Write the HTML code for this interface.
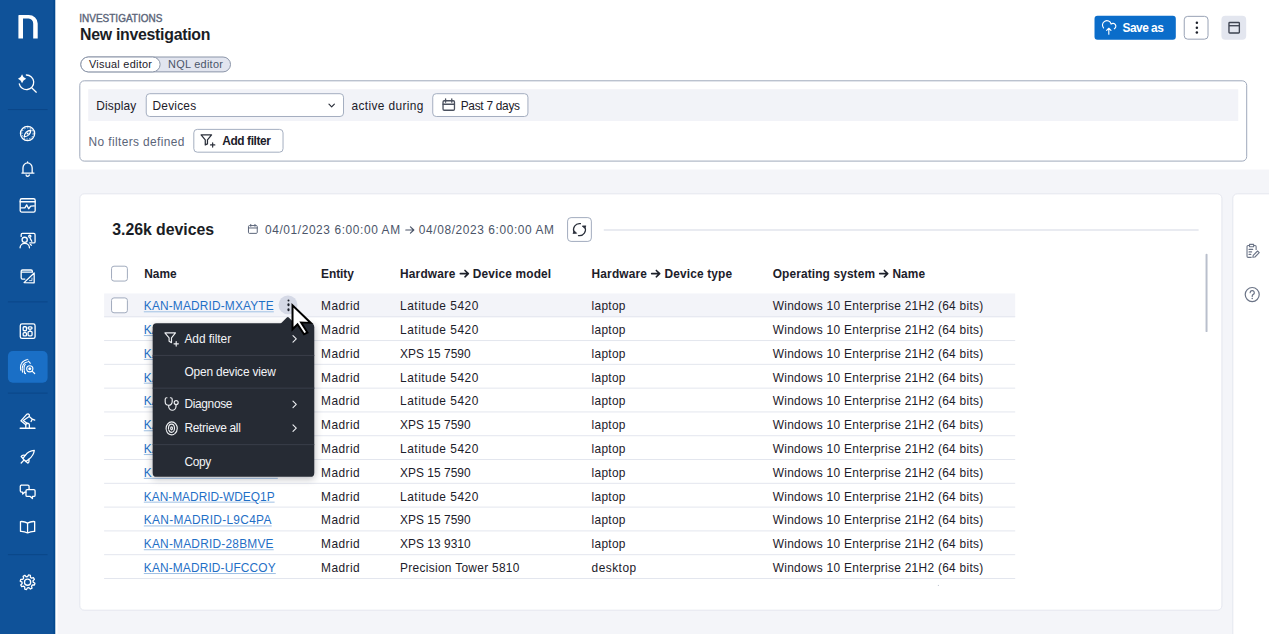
<!DOCTYPE html>
<html><head><meta charset="utf-8">
<style>
html,body{margin:0;padding:0;width:1269px;height:634px;overflow:hidden;background:#f4f5f9}
*{box-sizing:border-box}
#app{position:absolute;left:0;top:0;width:1280px;height:640px;transform:scale(0.99140625);transform-origin:0 0;font-family:"Liberation Sans",sans-serif;color:#1c202a;background:#f4f5f9;overflow:hidden}
.a{position:absolute}
.t{position:absolute;white-space:nowrap;line-height:1}
.lnk{text-decoration:underline;text-decoration-color:#9fc0e4;text-underline-offset:1.4px;text-decoration-thickness:1px}
.row{position:absolute;left:104.9px;width:919.2px;height:24px;border-bottom:1px solid #e3e6ee}
svg{display:block;overflow:visible}
.ar svg{display:inline-block}
.sb{-webkit-text-stroke:0.4px currentColor}
</style></head>
<body>
<div id="app">
<div class="a" style="left:0.00px;top:0.00px;width:55.48px;height:639.50px;background:#0f5299"></div>
<div class="a" style="left:54.37px;top:0.00px;width:1.61px;height:639.50px;background:#03498f"></div>
<div class="a" style="left:55.98px;top:0.00px;width:1.71px;height:639.50px;background:#ffffff"></div>
<div class="a" style="left:8.07px;top:109.74px;width:39.64px;height:1.01px;background:#0b4688"></div>
<div class="a" style="left:8.07px;top:304.42px;width:39.64px;height:1.01px;background:#0b4688"></div>
<div class="a" style="left:8.07px;top:395.50px;width:39.64px;height:1.01px;background:#0b4688"></div>
<div class="a" style="left:8.07px;top:558.60px;width:39.64px;height:1.01px;background:#0b4688"></div>
<div class="a" style="left:7.97px;top:354.04px;width:39.74px;height:31.47px;background:#1a6fc6;border-radius:5px"></div>
<svg class="a" style="left:10.09px;top:10.09px;width:36.31px;height:36.31px;" viewBox="0 0 36 36"><path d="M8.5 28.7V5.6Q8.5 5.1 9.1 5.1H18.8A9 8.5 0 0 1 27.8 13.6V28.7H23.3V13.8A4.6 5 0 0 0 18.7 8.6H13.1V28.7Z" fill="#fff"/></svg>
<svg class="a" style="left:14.12px;top:70.61px;width:28.24px;height:28.24px;" viewBox="0 0 28 28"><path d="M8.17 3.9Q9.1 7.4 12.3 8.4Q9.1 9.4 8.17 12.9Q7.2 9.4 4.1 8.4Q7.2 7.4 8.17 3.9Z" fill="#fff"/><path d="M12.5 4.6A7.3 7.3 0 1 1 5.4 13.4" fill="none" stroke="#fff" stroke-width="1.3" stroke-linecap="round" stroke-linejoin="round"/><path d="M17.8 17.3L22.4 21.8" fill="none" stroke="#fff" stroke-width="1.3" stroke-linecap="round" stroke-linejoin="round"/></svg>
<svg class="a" style="left:14.12px;top:121.04px;width:28.24px;height:28.24px;" viewBox="0 0 28 28"><circle cx="13.7" cy="13.5" r="7.1" fill="none" stroke="#fff" stroke-width="1.3" stroke-linecap="round" stroke-linejoin="round" stroke-width="1.5"/><circle cx="13.7" cy="13.5" r="5.6" fill="none" stroke="#fff" stroke-width="1" stroke-dasharray="1.2 1.6"/><path d="M10.3 16.9Q10.9 11 17.1 10.1Q16.5 16.2 10.3 16.9Z" fill="none" stroke="#fff" stroke-width="1.2" stroke-linejoin="round"/><circle cx="13.7" cy="13.5" r="1" fill="#fff"/></svg>
<svg class="a" style="left:14.12px;top:157.35px;width:28.24px;height:28.24px;" viewBox="0 0 28 28"><path d="M8 17.4H20.1M9.1 17.3V12.3A4.6 5 0 0 1 18.3 12.3V17.3M13.7 7.3V6.3" fill="none" stroke="#fff" stroke-width="1.3" stroke-linecap="round" stroke-linejoin="round"/><path d="M12.2 19.3A1.6 1.3 0 0 0 15.4 19.3" fill="none" stroke="#fff" stroke-width="1.3" stroke-linecap="round" stroke-linejoin="round"/></svg>
<svg class="a" style="left:14.12px;top:192.66px;width:28.24px;height:28.24px;" viewBox="0 0 28 28"><rect x="6.3" y="7.4" width="15" height="13.3" rx="1.6" fill="none" stroke="#fff" stroke-width="1.3" stroke-linecap="round" stroke-linejoin="round"/><path d="M6.3 10.4H21.3M7 16.6H11L12.8 13.5L14.8 17.4L16.8 14.8L20.4 14.6" fill="none" stroke="#fff" stroke-width="1.3" stroke-linecap="round" stroke-linejoin="round"/></svg>
<svg class="a" style="left:14.12px;top:228.97px;width:28.24px;height:28.24px;" viewBox="0 0 28 28"><path d="M7.3 9.4V7.6Q7.3 6.4 8.5 6.4H20Q21.2 6.4 21.2 7.6V14.7Q21.2 15.9 20 15.9H15.8" fill="none" stroke="#fff" stroke-width="1.3" stroke-linecap="round" stroke-linejoin="round"/><circle cx="10.8" cy="12.8" r="2.6" fill="none" stroke="#fff" stroke-width="1.3" stroke-linecap="round" stroke-linejoin="round"/><path d="M6.2 20.8A4.7 4.5 0 0 1 15.6 20.8" fill="none" stroke="#fff" stroke-width="1.3" stroke-linecap="round" stroke-linejoin="round"/><circle cx="15.9" cy="9.3" r="1.1" fill="none" stroke="#fff" stroke-width="1.3" stroke-linecap="round" stroke-linejoin="round"/><path d="M16.3 11.3L17.9 14.2M16.5 17.5L17.6 18.2" fill="none" stroke="#fff" stroke-width="1.3" stroke-linecap="round" stroke-linejoin="round"/></svg>
<svg class="a" style="left:14.12px;top:265.28px;width:28.24px;height:28.24px;" viewBox="0 0 28 28"><path d="M11 16.4H8.6Q7.3 16.4 7.3 15.1V8.6Q7.3 7.3 8.6 7.3H17.2Q18.5 7.3 18.5 8.6V9.5H7.3" fill="none" stroke="#fff" stroke-width="1.3" stroke-linecap="round" stroke-linejoin="round"/><path d="M10.2 19.9L20.3 10.2V20.1Z" fill="none" stroke="#fff" stroke-width="1.3" stroke-linecap="round" stroke-linejoin="round"/><path d="M15.6 17.9H18.1V15.3" fill="none" stroke="#fff" stroke-width="1" stroke-linecap="round" opacity=".8"/></svg>
<svg class="a" style="left:14.12px;top:319.75px;width:28.24px;height:28.24px;" viewBox="0 0 28 28"><rect x="6.4" y="6.6" width="14.8" height="14.6" rx="1.8" fill="none" stroke="#fff" stroke-width="1.3" stroke-linecap="round" stroke-linejoin="round"/><rect x="9.3" y="9.5" width="3.3" height="4" rx="0.9" fill="none" stroke="#fff" stroke-width="1.3" stroke-linecap="round" stroke-linejoin="round" stroke-width="1.1"/><rect x="9.3" y="15.4" width="3.3" height="3.2" rx="0.9" fill="none" stroke="#fff" stroke-width="1.3" stroke-linecap="round" stroke-linejoin="round" stroke-width="1.1"/><rect x="14.2" y="9.6" width="4" height="2.3" rx="1.1" fill="none" stroke="#fff" stroke-width="1.3" stroke-linecap="round" stroke-linejoin="round" stroke-width="1.1"/><rect x="14.2" y="14.1" width="4" height="4.5" rx="1" fill="none" stroke="#fff" stroke-width="1.3" stroke-linecap="round" stroke-linejoin="round" stroke-width="1.1"/><path d="M16.2 11.9V14.1" stroke="#fff" stroke-width="1.1"/></svg>
<svg class="a" style="left:14.12px;top:356.06px;width:28.24px;height:28.24px;" viewBox="0 0 28 28"><g fill="none" stroke="#fff" stroke-width="1.15" stroke-linecap="round"><path d="M6.9 17.2Q5.2 8.6 13.9 6.5" stroke-dasharray="2.6 1"/><path d="M8.7 19.2Q7.1 10.7 13.4 9" stroke-dasharray="2.4 1"/><path d="M10.8 20.2Q9.4 13.6 11.3 11.6" stroke-dasharray="1.8 1"/><path d="M14.5 8.2Q15.6 8.8 16.4 10.4"/><path d="M11.2 20.3L11.6 20.6"/><circle cx="15.9" cy="15.9" r="3.1"/><path d="M18.2 18.2L20.8 20.6"/></g><circle cx="15.9" cy="15.9" r="1.5" fill="#fff"/></svg>
<svg class="a" style="left:14.12px;top:410.53px;width:28.24px;height:28.24px;" viewBox="0 0 28 28"><path d="M6.4 20.8H21" fill="none" stroke="#fff" stroke-width="1.6" stroke-linecap="round"/><path d="M11.9 20V17.6A1.8 1.8 0 0 1 15.5 17.6V20" fill="none" stroke="#fff" stroke-width="1.3" stroke-linecap="round" stroke-linejoin="round"/><path d="M11.9 17.4L7 13.4L12.8 6.9Q14.3 5.9 15.4 7.2Q16 8.6 14.6 9.6L9.4 13.1L13.4 16.1" fill="none" stroke="#fff" stroke-width="1.3" stroke-linecap="round" stroke-linejoin="round"/><path d="M15.6 9.3L18.2 11.5M17.2 14L18.4 11.7L20.9 12.6" fill="none" stroke="#fff" stroke-width="1.3" stroke-linecap="round" stroke-linejoin="round"/></svg>
<svg class="a" style="left:14.12px;top:446.84px;width:28.24px;height:28.24px;" viewBox="0 0 28 28"><path d="M20.4 7.3Q15 7.6 11.2 12.4L8.9 15.4L11.9 18.3L15 16Q19.8 12.3 20.4 7.3Z" fill="none" stroke="#fff" stroke-width="1.3" stroke-linecap="round" stroke-linejoin="round"/><path d="M11.3 12.3Q8.3 11.5 7.3 13.3L8.7 14.8M14.9 16.1Q15.7 19.1 13.9 20L12.5 18.6M9.8 17.2L7.3 19.9" fill="none" stroke="#fff" stroke-width="1.3" stroke-linecap="round" stroke-linejoin="round"/></svg>
<svg class="a" style="left:14.12px;top:482.14px;width:28.24px;height:28.24px;" viewBox="0 0 28 28"><path d="M7.8 7.2H14Q15.2 7.2 15.2 8.4V11.6M12.1 14.2H11.1L8.8 16.2V14.2H7.6Q6.4 14.2 6.4 13V8.4Q6.4 7.2 7.6 7.2" fill="none" stroke="#fff" stroke-width="1.3" stroke-linecap="round" stroke-linejoin="round"/><path d="M13.3 11.7H20Q21.2 11.7 21.2 12.9V17.4Q21.2 18.6 20 18.6H18.6V20.7L16.3 18.6H13.3Q12.1 18.6 12.1 17.4V12.9Q12.1 11.7 13.3 11.7Z" fill="none" stroke="#fff" stroke-width="1.3" stroke-linecap="round" stroke-linejoin="round"/></svg>
<svg class="a" style="left:14.12px;top:518.46px;width:28.24px;height:28.24px;" viewBox="0 0 28 28"><path d="M13.7 9.6V19.3M13.7 9.6Q10.5 7.6 6.6 8V17.8Q10.5 17.6 13.7 19.4Q16.9 17.6 20.8 17.8V8Q16.9 7.6 13.7 9.6Z" fill="none" stroke="#fff" stroke-width="1.3" stroke-linecap="round" stroke-linejoin="round"/></svg>
<svg class="a" style="left:14.12px;top:572.92px;width:28.24px;height:28.24px;" viewBox="0 0 28 28"><path d="M19.30 14.10 L21.03 15.14 L20.54 16.93 L18.52 16.95 L17.66 18.06 L18.14 20.02 L16.53 20.94 L15.09 19.52 L13.70 19.70 L12.66 21.43 L10.87 20.94 L10.85 18.92 L9.74 18.06 L7.78 18.54 L6.86 16.93 L8.28 15.49 L8.10 14.10 L6.37 13.06 L6.86 11.27 L8.88 11.25 L9.74 10.14 L9.26 8.18 L10.87 7.26 L12.31 8.68 L13.70 8.50 L14.74 6.77 L16.53 7.26 L16.55 9.28 L17.66 10.14 L19.62 9.66 L20.54 11.27 L19.12 12.71Z" fill="none" stroke="#fff" stroke-width="1.3" stroke-linecap="round" stroke-linejoin="round"/><circle cx="13.7" cy="14.1" r="3.1" fill="none" stroke="#fff" stroke-width="1.3" stroke-linecap="round" stroke-linejoin="round"/></svg>
<div class="a" style="left:57.49px;top:0.00px;width:1222.51px;height:171.07px;background:#ffffff"></div>
<div class="a" style="left:80.69px;top:56.79px;width:152.81px;height:15.74px;border:1px solid #8a94a7;border-radius:8px;background:#e2e5ef"></div>
<div class="a" style="left:80.69px;top:56.79px;width:81.20px;height:15.74px;border:1px solid #8a94a7;border-radius:8px;background:#ffffff"></div>
<div class="a" style="left:1103.79px;top:16.14px;width:82.00px;height:23.70px;background:#0b6dca;border-radius:3px"></div>
<svg class="a" style="left:1109.54px;top:19.16px;width:18.16px;height:18.16px;" viewBox="0 0 18 18"><path d="M3.05 9.13A4.4 4.4 0 1 1 10.65 5.22A2.9 2.9 0 1 1 13.9 10.0M8.35 15.3V9.5M6.2 11.6L8.35 9.4L10.5 11.6" fill="none" stroke="#fff" stroke-width="1.15" stroke-linecap="round" stroke-linejoin="round"/></svg>
<div class="a" style="left:1193.56px;top:15.94px;width:25.82px;height:24.11px;border:1.5px solid #97a1b4;border-radius:4px;background:#fff"></div>
<svg class="a" style="left:1200.62px;top:18.16px;width:12.10px;height:20.17px;" viewBox="0 0 12 20"><circle cx="6.2" cy="5.0" r="1.25" fill="#1c202a"/><circle cx="6.2" cy="9.9" r="1.25" fill="#1c202a"/><circle cx="6.2" cy="14.7" r="1.25" fill="#1c202a"/></svg>
<div class="a" style="left:1231.58px;top:16.14px;width:25.22px;height:23.80px;background:#e3e6ef;border-radius:4px"></div>
<svg class="a" style="left:1236.63px;top:20.68px;width:16.14px;height:15.13px;" viewBox="0 0 16 15"><rect x="2.6" y="1.7" width="10.4" height="10.5" rx="0.8" fill="none" stroke="#3d4350" stroke-width="1.35"/><path d="M2.6 4.9H13" stroke="#3d4350" stroke-width="1.35"/></svg>
<div class="a" style="left:79.68px;top:81.10px;width:1178.12px;height:82.31px;border:1.8px solid #9ea8ba;border-radius:5px;background:#fff"></div>
<div class="a" style="left:88.56px;top:89.97px;width:1160.37px;height:31.77px;background:#f2f3f8"></div>
<div class="a" style="left:146.56px;top:94.31px;width:200.02px;height:23.70px;border:1.5px solid #a3adbf;border-radius:4px;background:#fff"></div>
<svg class="a" style="left:328.83px;top:101.67px;width:11.10px;height:9.08px;" viewBox="0 0 11 9"><path d="M2.8 3L5.5 5.7L8.2 3" fill="none" stroke="#2a2f3a" stroke-width="1.2" stroke-linecap="round" stroke-linejoin="round"/></svg>
<div class="a" style="left:435.74px;top:94.31px;width:97.34px;height:23.70px;border:1.5px solid #a3adbf;border-radius:4px;background:#fff"></div>
<svg class="a" style="left:443.81px;top:97.84px;width:16.14px;height:16.14px;" viewBox="0 0 16 16"><rect x="2.85" y="3.6" width="11.45" height="9.5" rx="1.2" fill="none" stroke="#4a505e" stroke-width="1.3"/><path d="M2.85 7.1H14.3M5.4 1.7V5.0M11.6 1.7V5.0" fill="none" stroke="#4a505e" stroke-width="1.3" stroke-linecap="round"/></svg>
<div class="a" style="left:194.87px;top:130.22px;width:90.68px;height:23.70px;border:1.5px solid #a3adbf;border-radius:4px;background:#fff"></div>
<svg class="a" style="left:200.72px;top:134.15px;width:17.15px;height:16.14px;" viewBox="0 0 17 16"><path d="M1.8 2.1H12.3L8.2 7V11.1L6 12.1V7Z" fill="none" stroke="#2a2f3a" stroke-width="1.25" stroke-linejoin="round"/><path d="M13.4 9.9V14.2M11.25 12.05H15.55" stroke="#2a2f3a" stroke-width="1.2" stroke-linecap="round"/></svg>
<div class="a" style="left:80.39px;top:194.98px;width:1152.50px;height:420.61px;background:#fff;border:1px solid #e4e6ee;border-radius:5px"></div>
<div class="a" style="left:1243.49px;top:194.98px;width:57.70px;height:460.66px;background:#fff;border:1px solid #e4e6ee;border-radius:5px"></div>
<svg class="a" style="left:1253.77px;top:244.10px;width:18.16px;height:18.16px;" viewBox="0 0 18 18"><path d="M6.3 3.6H4.9Q3.8 3.6 3.8 4.7V14.4Q3.8 15.5 4.9 15.5H8.4M12.9 8.2V4.7Q12.9 3.6 11.8 3.6H10.4M6.3 2.5H10.4V4.9H6.3Z" fill="none" stroke="#6b7487" stroke-width="1.1" stroke-linejoin="round"/><path d="M5.8 7.5H9.5M5.8 10H8.4M5.8 12.5H7.6M9.6 15.4L10 13.4L14.3 9.1L16 10.8L11.7 15.1Z" fill="none" stroke="#6b7487" stroke-width="1.1" stroke-linejoin="round" stroke-linecap="round"/></svg>
<svg class="a" style="left:1253.77px;top:288.48px;width:18.16px;height:18.16px;" viewBox="0 0 18 18"><circle cx="9" cy="9" r="7" fill="none" stroke="#6b7487" stroke-width="1.2"/><path d="M6.9 7.2A2.1 2.1 0 1 1 9.8 9.1Q9 9.5 9 10.4V10.9" fill="none" stroke="#6b7487" stroke-width="1.2" stroke-linecap="round"/><circle cx="9" cy="12.9" r="0.8" fill="#6b7487"/></svg>
<svg class="a" style="left:248.13px;top:223.92px;width:14.12px;height:14.12px;" viewBox="0 0 14 14"><rect x="2.6" y="3.5" width="8.8" height="7.8" rx="1" fill="none" stroke="#5b6579" stroke-width="1"/><path d="M2.6 5.9H11.4M4.9 2.3V4.2M9.1 2.3V4.2" fill="none" stroke="#5b6579" stroke-width="1" stroke-linecap="round"/></svg>
<div class="a" style="left:571.91px;top:219.28px;width:25.42px;height:24.41px;border:1.3px solid #a1abbd;border-radius:4px;background:#fff"></div>
<svg class="a" style="left:574.94px;top:221.91px;width:19.16px;height:19.16px;" viewBox="0 0 19 19"><path d="M10.4 3.6A6 6 0 0 0 4.2 12.4M8.4 15.5A6 6 0 0 0 14.6 6.6" fill="none" stroke="#2a2f3a" stroke-width="1.2" stroke-linecap="round"/><path d="M2.9 13.3L4.3 10.9L6.6 13.2Z M15.9 5.8L14.5 8.2L12.2 5.9Z" fill="#2a2f3a" stroke="#2a2f3a" stroke-width="0.8" stroke-linejoin="round"/></svg>
<div class="a" style="left:609.24px;top:231.39px;width:599.65px;height:1.21px;background:#e9ebf1"></div>
<div class="a" style="left:1216.25px;top:255.50px;width:1.51px;height:79.38px;background:#b9bfcc;border-radius:1px"></div>
<div class="a" style="left:112.47px;top:267.70px;width:16.64px;height:16.34px;border:1.6px solid #a0aabc;border-radius:3px;background:#fff"></div>
<div class="row" style="top:295.84px;background:#f3f4f9;"></div>
<div class="row" style="top:319.84px;"></div>
<div class="row" style="top:343.83px;"></div>
<div class="row" style="top:367.83px;"></div>
<div class="row" style="top:391.83px;"></div>
<div class="row" style="top:415.82px;"></div>
<div class="row" style="top:439.82px;"></div>
<div class="row" style="top:463.82px;"></div>
<div class="row" style="top:487.81px;"></div>
<div class="row" style="top:511.81px;"></div>
<div class="row" style="top:535.80px;"></div>
<div class="row" style="top:559.80px;"></div>
<div id="tx0" class="t sb scl" style="left:80.49px;top:12.99px;font-size:11px;font-weight:400;color:#5b6579;transform:scaleX(0.9151);transform-origin:0 0">INVESTIGATIONS</div>
<div id="tx1" class="t" style="left:80.69px;top:26.74px;font-size:16px;font-weight:700;color:#1a1d25;letter-spacing:-0.277px">New investigation</div>
<div id="tx2" class="t" style="left:89.67px;top:59.99px;font-size:11px;font-weight:400;color:#1c202a;letter-spacing:0.270px">Visual editor</div>
<div id="tx3" class="t" style="left:169.56px;top:59.99px;font-size:11px;font-weight:400;color:#4b5569;letter-spacing:0.278px">NQL editor</div>
<div id="tx4" class="t" style="left:1132.33px;top:22.08px;font-size:12px;font-weight:700;color:#ffffff;letter-spacing:-0.524px">Save as</div>
<div id="tx5" class="t" style="left:97.13px;top:100.75px;font-size:12px;font-weight:400;color:#1c202a;letter-spacing:0.141px">Display</div>
<div id="tx6" class="t" style="left:153.92px;top:100.75px;font-size:12px;font-weight:400;color:#1c202a;letter-spacing:0.199px">Devices</div>
<div id="tx7" class="t" style="left:354.45px;top:100.75px;font-size:12px;font-weight:400;color:#1c202a;letter-spacing:0.383px">active during</div>
<div id="tx8" class="t" style="left:464.69px;top:100.75px;font-size:12px;font-weight:400;color:#1c202a;letter-spacing:-0.281px">Past 7 days</div>
<div id="tx9" class="t" style="left:89.27px;top:136.56px;font-size:12px;font-weight:400;color:#5b6579;letter-spacing:0.394px">No filters defined</div>
<div id="tx10" class="t" style="left:224.23px;top:135.95px;font-size:12px;font-weight:700;color:#1c202a;letter-spacing:-0.415px">Add filter</div>
<div id="tx11" class="t" style="left:113.27px;top:224.34px;font-size:16px;font-weight:700;color:#1a1d25;letter-spacing:-0.048px">3.26k devices</div>
<div id="tx12" class="t" style="left:267.30px;top:226.33px;font-size:12px;font-weight:400;color:#4b5569;letter-spacing:0.606px">04/01/2023 6:00:00 AM <span class="ar"><svg width="9.3" height="8" viewBox="0 0 9.3 8" style="display:inline-block;vertical-align:0px;margin:0 0.6px"><path d="M0.3 4H8.4M5 0.8L8.4 4L5 7.2" fill="none" stroke="currentColor" stroke-width="1.2" stroke-linecap="round" stroke-linejoin="round"/></svg></span> 04/08/2023 6:00:00 AM</div>
<div id="tx13" class="t" style="left:145.45px;top:269.91px;font-size:12px;font-weight:700;color:#1c202a;letter-spacing:0.049px">Name</div>
<div id="tx14" class="t" style="left:323.88px;top:269.91px;font-size:12px;font-weight:700;color:#1c202a;letter-spacing:-0.077px">Entity</div>
<div id="tx15" class="t" style="left:403.57px;top:269.91px;font-size:12px;font-weight:700;color:#1c202a;letter-spacing:0.150px">Hardware <span class="ar"><svg width="9.3" height="8" viewBox="0 0 9.3 8" style="display:inline-block;vertical-align:0px;margin:0 0.6px"><path d="M0.3 4H8.4M5 0.8L8.4 4L5 7.2" fill="none" stroke="currentColor" stroke-width="1.6" stroke-linecap="round" stroke-linejoin="round"/></svg></span> Device model</div>
<div id="tx16" class="t" style="left:596.73px;top:269.91px;font-size:12px;font-weight:700;color:#1c202a;letter-spacing:0.160px">Hardware <span class="ar"><svg width="9.3" height="8" viewBox="0 0 9.3 8" style="display:inline-block;vertical-align:0px;margin:0 0.6px"><path d="M0.3 4H8.4M5 0.8L8.4 4L5 7.2" fill="none" stroke="currentColor" stroke-width="1.6" stroke-linecap="round" stroke-linejoin="round"/></svg></span> Device type</div>
<div id="tx17" class="t" style="left:779.40px;top:269.91px;font-size:12px;font-weight:700;color:#1c202a;letter-spacing:0.123px">Operating system <span class="ar"><svg width="9.3" height="8" viewBox="0 0 9.3 8" style="display:inline-block;vertical-align:0px;margin:0 0.6px"><path d="M0.3 4H8.4M5 0.8L8.4 4L5 7.2" fill="none" stroke="currentColor" stroke-width="1.6" stroke-linecap="round" stroke-linejoin="round"/></svg></span> Name</div>
<div id="tx18" class="t lnk" style="left:145.05px;top:303.09px;font-size:12px;font-weight:400;color:#1f6fc6;letter-spacing:0.157px">KAN-MADRID-MXAYTE</div>
<div id="tx19" class="t" style="left:323.88px;top:303.09px;font-size:12px;font-weight:400;color:#1c202a;letter-spacing:0.442px">Madrid</div>
<div id="tx20" class="t" style="left:403.57px;top:303.09px;font-size:12px;font-weight:400;color:#1c202a;letter-spacing:0.511px">Latitude 5420</div>
<div id="tx21" class="t" style="left:596.73px;top:303.09px;font-size:12px;font-weight:400;color:#1c202a;letter-spacing:0.282px">laptop</div>
<div id="tx22" class="t" style="left:779.40px;top:303.09px;font-size:12px;font-weight:400;color:#1c202a;letter-spacing:0.293px">Windows 10 Enterprise 21H2 (64 bits)</div>
<div id="tx23" class="t lnk" style="left:145.05px;top:327.09px;font-size:12px;font-weight:400;color:#1f6fc6;letter-spacing:0.007px">KAN-MADRID-QW2KLM</div>
<div id="tx24" class="t" style="left:323.88px;top:327.09px;font-size:12px;font-weight:400;color:#1c202a;letter-spacing:0.442px">Madrid</div>
<div id="tx25" class="t" style="left:403.57px;top:327.09px;font-size:12px;font-weight:400;color:#1c202a;letter-spacing:0.511px">Latitude 5420</div>
<div id="tx26" class="t" style="left:596.73px;top:327.09px;font-size:12px;font-weight:400;color:#1c202a;letter-spacing:0.282px">laptop</div>
<div id="tx27" class="t" style="left:779.40px;top:327.09px;font-size:12px;font-weight:400;color:#1c202a;letter-spacing:0.293px">Windows 10 Enterprise 21H2 (64 bits)</div>
<div id="tx28" class="t lnk" style="left:145.05px;top:351.08px;font-size:12px;font-weight:400;color:#1f6fc6;letter-spacing:0.262px">KAN-MADRID-HT7RZE</div>
<div id="tx29" class="t" style="left:323.88px;top:351.08px;font-size:12px;font-weight:400;color:#1c202a;letter-spacing:0.442px">Madrid</div>
<div id="tx30" class="t" style="left:403.57px;top:351.08px;font-size:12px;font-weight:400;color:#1c202a;letter-spacing:0.034px">XPS 15 7590</div>
<div id="tx31" class="t" style="left:596.73px;top:351.08px;font-size:12px;font-weight:400;color:#1c202a;letter-spacing:0.282px">laptop</div>
<div id="tx32" class="t" style="left:779.40px;top:351.08px;font-size:12px;font-weight:400;color:#1c202a;letter-spacing:0.293px">Windows 10 Enterprise 21H2 (64 bits)</div>
<div id="tx33" class="t lnk" style="left:145.05px;top:375.08px;font-size:12px;font-weight:400;color:#1f6fc6;letter-spacing:0.359px">KAN-MADRID-PL4DSX</div>
<div id="tx34" class="t" style="left:323.88px;top:375.08px;font-size:12px;font-weight:400;color:#1c202a;letter-spacing:0.442px">Madrid</div>
<div id="tx35" class="t" style="left:403.57px;top:375.08px;font-size:12px;font-weight:400;color:#1c202a;letter-spacing:0.511px">Latitude 5420</div>
<div id="tx36" class="t" style="left:596.73px;top:375.08px;font-size:12px;font-weight:400;color:#1c202a;letter-spacing:0.282px">laptop</div>
<div id="tx37" class="t" style="left:779.40px;top:375.08px;font-size:12px;font-weight:400;color:#1c202a;letter-spacing:0.293px">Windows 10 Enterprise 21H2 (64 bits)</div>
<div id="tx38" class="t lnk" style="left:145.05px;top:399.08px;font-size:12px;font-weight:400;color:#1f6fc6;letter-spacing:0.106px">KAN-MADRID-ZN8WQA</div>
<div id="tx39" class="t" style="left:323.88px;top:399.08px;font-size:12px;font-weight:400;color:#1c202a;letter-spacing:0.442px">Madrid</div>
<div id="tx40" class="t" style="left:403.57px;top:399.08px;font-size:12px;font-weight:400;color:#1c202a;letter-spacing:0.511px">Latitude 5420</div>
<div id="tx41" class="t" style="left:596.73px;top:399.08px;font-size:12px;font-weight:400;color:#1c202a;letter-spacing:0.282px">laptop</div>
<div id="tx42" class="t" style="left:779.40px;top:399.08px;font-size:12px;font-weight:400;color:#1c202a;letter-spacing:0.293px">Windows 10 Enterprise 21H2 (64 bits)</div>
<div id="tx43" class="t lnk" style="left:145.05px;top:423.07px;font-size:12px;font-weight:400;color:#1f6fc6;letter-spacing:0.183px">KAN-MADRID-BV3CYU</div>
<div id="tx44" class="t" style="left:323.88px;top:423.07px;font-size:12px;font-weight:400;color:#1c202a;letter-spacing:0.442px">Madrid</div>
<div id="tx45" class="t" style="left:403.57px;top:423.07px;font-size:12px;font-weight:400;color:#1c202a;letter-spacing:0.034px">XPS 15 7590</div>
<div id="tx46" class="t" style="left:596.73px;top:423.07px;font-size:12px;font-weight:400;color:#1c202a;letter-spacing:0.282px">laptop</div>
<div id="tx47" class="t" style="left:779.40px;top:423.07px;font-size:12px;font-weight:400;color:#1c202a;letter-spacing:0.293px">Windows 10 Enterprise 21H2 (64 bits)</div>
<div id="tx48" class="t lnk" style="left:145.05px;top:447.07px;font-size:12px;font-weight:400;color:#1f6fc6;letter-spacing:0.204px">KAN-MADRID-RM6TFD</div>
<div id="tx49" class="t" style="left:323.88px;top:447.07px;font-size:12px;font-weight:400;color:#1c202a;letter-spacing:0.442px">Madrid</div>
<div id="tx50" class="t" style="left:403.57px;top:447.07px;font-size:12px;font-weight:400;color:#1c202a;letter-spacing:0.511px">Latitude 5420</div>
<div id="tx51" class="t" style="left:596.73px;top:447.07px;font-size:12px;font-weight:400;color:#1c202a;letter-spacing:0.282px">laptop</div>
<div id="tx52" class="t" style="left:779.40px;top:447.07px;font-size:12px;font-weight:400;color:#1c202a;letter-spacing:0.293px">Windows 10 Enterprise 21H2 (64 bits)</div>
<div id="tx53" class="t lnk" style="left:145.05px;top:471.06px;font-size:12px;font-weight:400;color:transparent;letter-spacing:0.537px">KAN-MADRID-GE9JXK</div>
<div id="tx54" class="t" style="left:145.05px;top:471.06px;font-size:12px;font-weight:400;color:#1f6fc6;letter-spacing:0.659px">K</div>
<div id="tx55" class="t" style="left:323.88px;top:471.06px;font-size:12px;font-weight:400;color:#1c202a;letter-spacing:0.442px">Madrid</div>
<div id="tx56" class="t" style="left:403.57px;top:471.06px;font-size:12px;font-weight:400;color:#1c202a;letter-spacing:0.034px">XPS 15 7590</div>
<div id="tx57" class="t" style="left:596.73px;top:471.06px;font-size:12px;font-weight:400;color:#1c202a;letter-spacing:0.282px">laptop</div>
<div id="tx58" class="t" style="left:779.40px;top:471.06px;font-size:12px;font-weight:400;color:#1c202a;letter-spacing:0.293px">Windows 10 Enterprise 21H2 (64 bits)</div>
<div id="tx59" class="t lnk" style="left:145.05px;top:495.06px;font-size:12px;font-weight:400;color:#1f6fc6;letter-spacing:-0.005px">KAN-MADRID-WDEQ1P</div>
<div id="tx60" class="t" style="left:323.88px;top:495.06px;font-size:12px;font-weight:400;color:#1c202a;letter-spacing:0.442px">Madrid</div>
<div id="tx61" class="t" style="left:403.57px;top:495.06px;font-size:12px;font-weight:400;color:#1c202a;letter-spacing:0.511px">Latitude 5420</div>
<div id="tx62" class="t" style="left:596.73px;top:495.06px;font-size:12px;font-weight:400;color:#1c202a;letter-spacing:0.282px">laptop</div>
<div id="tx63" class="t" style="left:779.40px;top:495.06px;font-size:12px;font-weight:400;color:#1c202a;letter-spacing:0.293px">Windows 10 Enterprise 21H2 (64 bits)</div>
<div id="tx64" class="t lnk" style="left:145.05px;top:519.06px;font-size:12px;font-weight:400;color:#1f6fc6;letter-spacing:0.306px">KAN-MADRID-L9C4PA</div>
<div id="tx65" class="t" style="left:323.88px;top:519.06px;font-size:12px;font-weight:400;color:#1c202a;letter-spacing:0.442px">Madrid</div>
<div id="tx66" class="t" style="left:403.57px;top:519.06px;font-size:12px;font-weight:400;color:#1c202a;letter-spacing:0.034px">XPS 15 7590</div>
<div id="tx67" class="t" style="left:596.73px;top:519.06px;font-size:12px;font-weight:400;color:#1c202a;letter-spacing:0.282px">laptop</div>
<div id="tx68" class="t" style="left:779.40px;top:519.06px;font-size:12px;font-weight:400;color:#1c202a;letter-spacing:0.293px">Windows 10 Enterprise 21H2 (64 bits)</div>
<div id="tx69" class="t lnk" style="left:145.05px;top:543.05px;font-size:12px;font-weight:400;color:#1f6fc6;letter-spacing:0.216px">KAN-MADRID-28BMVE</div>
<div id="tx70" class="t" style="left:323.88px;top:543.05px;font-size:12px;font-weight:400;color:#1c202a;letter-spacing:0.442px">Madrid</div>
<div id="tx71" class="t" style="left:403.57px;top:543.05px;font-size:12px;font-weight:400;color:#1c202a;letter-spacing:0.034px">XPS 13 9310</div>
<div id="tx72" class="t" style="left:596.73px;top:543.05px;font-size:12px;font-weight:400;color:#1c202a;letter-spacing:0.282px">laptop</div>
<div id="tx73" class="t" style="left:779.40px;top:543.05px;font-size:12px;font-weight:400;color:#1c202a;letter-spacing:0.293px">Windows 10 Enterprise 21H2 (64 bits)</div>
<div id="tx74" class="t lnk" style="left:145.05px;top:567.05px;font-size:12px;font-weight:400;color:#1f6fc6;letter-spacing:0.145px">KAN-MADRID-UFCCOY</div>
<div id="tx75" class="t" style="left:323.88px;top:567.05px;font-size:12px;font-weight:400;color:#1c202a;letter-spacing:0.442px">Madrid</div>
<div id="tx76" class="t" style="left:403.57px;top:567.05px;font-size:12px;font-weight:400;color:#1c202a;letter-spacing:0.306px">Precision Tower 5810</div>
<div id="tx77" class="t" style="left:596.73px;top:567.05px;font-size:12px;font-weight:400;color:#1c202a;letter-spacing:0.480px">desktop</div>
<div id="tx78" class="t" style="left:779.40px;top:567.05px;font-size:12px;font-weight:400;color:#1c202a;letter-spacing:0.293px">Windows 10 Enterprise 21H2 (64 bits)</div>
<div class="a" style="left:112.47px;top:299.57px;width:16.64px;height:16.34px;border:1.6px solid #a0aabc;border-radius:3px;background:#fff"></div>
<div class="a" style="left:281.32px;top:298.46px;width:18.76px;height:18.76px;background:#d5d9e6;border-radius:50%"></div>
<div class="a" style="left:289.79px;top:301.74px;width:2.32px;height:2.32px;background:#1c202a;border-radius:50%"></div>
<div class="a" style="left:289.79px;top:306.48px;width:2.32px;height:2.32px;background:#1c202a;border-radius:50%"></div>
<div class="a" style="left:289.79px;top:311.22px;width:2.32px;height:2.32px;background:#1c202a;border-radius:50%"></div>
<div class="a" style="left:154.02px;top:326.00px;width:162.60px;height:155.13px;background:#262b34;border-radius:4px;box-shadow:0 2px 7px rgba(20,25,40,.28)"></div>
<svg class="a" style="left:280.41px;top:316.72px;width:22.19px;height:12.10px;" viewBox="0 0 22 12"><path d="M2.5 10L9.2 3.2Q10.2 2.3 11.2 3.2L18 10Z" fill="#262b34"/></svg>
<div class="a" style="left:154.02px;top:357.88px;width:162.60px;height:1.31px;background:#3a3f4a"></div>
<div class="a" style="left:154.02px;top:391.06px;width:162.60px;height:1.31px;background:#3a3f4a"></div>
<div class="a" style="left:154.02px;top:447.85px;width:162.60px;height:1.31px;background:#3a3f4a"></div>
<svg class="a" style="left:292.82px;top:336.90px;width:8.07px;height:10.09px;" viewBox="0 0 8 10"><path d="M2.5 1.5L5.8 4.8L2.5 8.1" fill="none" stroke="#eef0f3" stroke-width="1.1" stroke-linecap="round" stroke-linejoin="round"/></svg>
<svg class="a" style="left:292.82px;top:402.66px;width:8.07px;height:10.09px;" viewBox="0 0 8 10"><path d="M2.5 1.5L5.8 4.8L2.5 8.1" fill="none" stroke="#eef0f3" stroke-width="1.1" stroke-linecap="round" stroke-linejoin="round"/></svg>
<svg class="a" style="left:292.82px;top:426.67px;width:8.07px;height:10.09px;" viewBox="0 0 8 10"><path d="M2.5 1.5L5.8 4.8L2.5 8.1" fill="none" stroke="#eef0f3" stroke-width="1.1" stroke-linecap="round" stroke-linejoin="round"/></svg>
<svg class="a" style="left:164.41px;top:333.87px;width:18.16px;height:16.14px;" viewBox="0 0 18 16"><path d="M2.3 1.8H12.9L8.9 6.7V11.5L6.5 10.2V6.7Z" fill="none" stroke="#eef0f3" stroke-width="1.15" stroke-linecap="round" stroke-linejoin="round"/><path d="M13.6 10.5V15M11.4 12.75H15.8" fill="none" stroke="#eef0f3" stroke-width="1.15" stroke-linecap="round" stroke-linejoin="round"/></svg>
<svg class="a" style="left:164.41px;top:399.43px;width:18.16px;height:18.16px;" viewBox="0 0 18 18"><path d="M4.4 2.2H4.1Q2.6 2.2 2.6 3.8V6.2A3.5 3.5 0 0 0 9.6 6.2V3.8Q9.6 2.2 8.1 2.2H7.8M6.1 9.8V11A3.65 3.65 0 0 0 13.4 11V9.1" fill="none" stroke="#eef0f3" stroke-width="1.15" stroke-linecap="round" stroke-linejoin="round"/><circle cx="13.6" cy="7.0" r="2.0" fill="none" stroke="#eef0f3" stroke-width="1.15" stroke-linecap="round" stroke-linejoin="round"/></svg>
<svg class="a" style="left:164.41px;top:423.64px;width:18.16px;height:18.16px;" viewBox="0 0 18 18"><g fill="none" stroke="#eef0f3" stroke-width="1.15" stroke-linecap="round" stroke-linejoin="round" stroke-width="1.1"><ellipse cx="9.1" cy="8.0" rx="5.6" ry="6.5" stroke-dasharray="6 1.2 9 1.2 20"/><ellipse cx="8.9" cy="7.9" rx="3.0" ry="4.1" stroke-dasharray="9 1.2 30"/><ellipse cx="9.0" cy="8.0" rx="0.9" ry="1.5"/></g></svg>
<svg class="a" style="left:288.48px;top:300.58px;width:30.26px;height:42.36px;" viewBox="0 0 30 42"><path d="M7 6.9V30.9L12 25.9L18.5 35.9L21.9 34.1L15.6 24.2L25.3 24.5Z" fill="#fff" stroke="#000" stroke-width="2" stroke-linejoin="miter" stroke-miterlimit="10"/></svg>
<div class="a" style="left:946.23px;top:590.07px;width:1.21px;height:1.21px;background:#b9bfcc"></div>
<div id="tx79" class="t" style="left:186.00px;top:335.97px;font-size:12px;font-weight:400;color:#f3f4f7;letter-spacing:-0.025px">Add filter</div>
<div id="tx80" class="t" style="left:186.00px;top:368.96px;font-size:12px;font-weight:400;color:#f3f4f7;letter-spacing:-0.171px">Open device view</div>
<div id="tx81" class="t" style="left:186.00px;top:401.84px;font-size:12px;font-weight:400;color:#f3f4f7;letter-spacing:-0.324px">Diagnose</div>
<div id="tx82" class="t" style="left:186.00px;top:425.74px;font-size:12px;font-weight:400;color:#f3f4f7;letter-spacing:-0.279px">Retrieve all</div>
<div id="tx83" class="t" style="left:186.00px;top:460.04px;font-size:12px;font-weight:400;color:#f3f4f7;letter-spacing:-0.321px">Copy</div>
</div>
</body></html>
